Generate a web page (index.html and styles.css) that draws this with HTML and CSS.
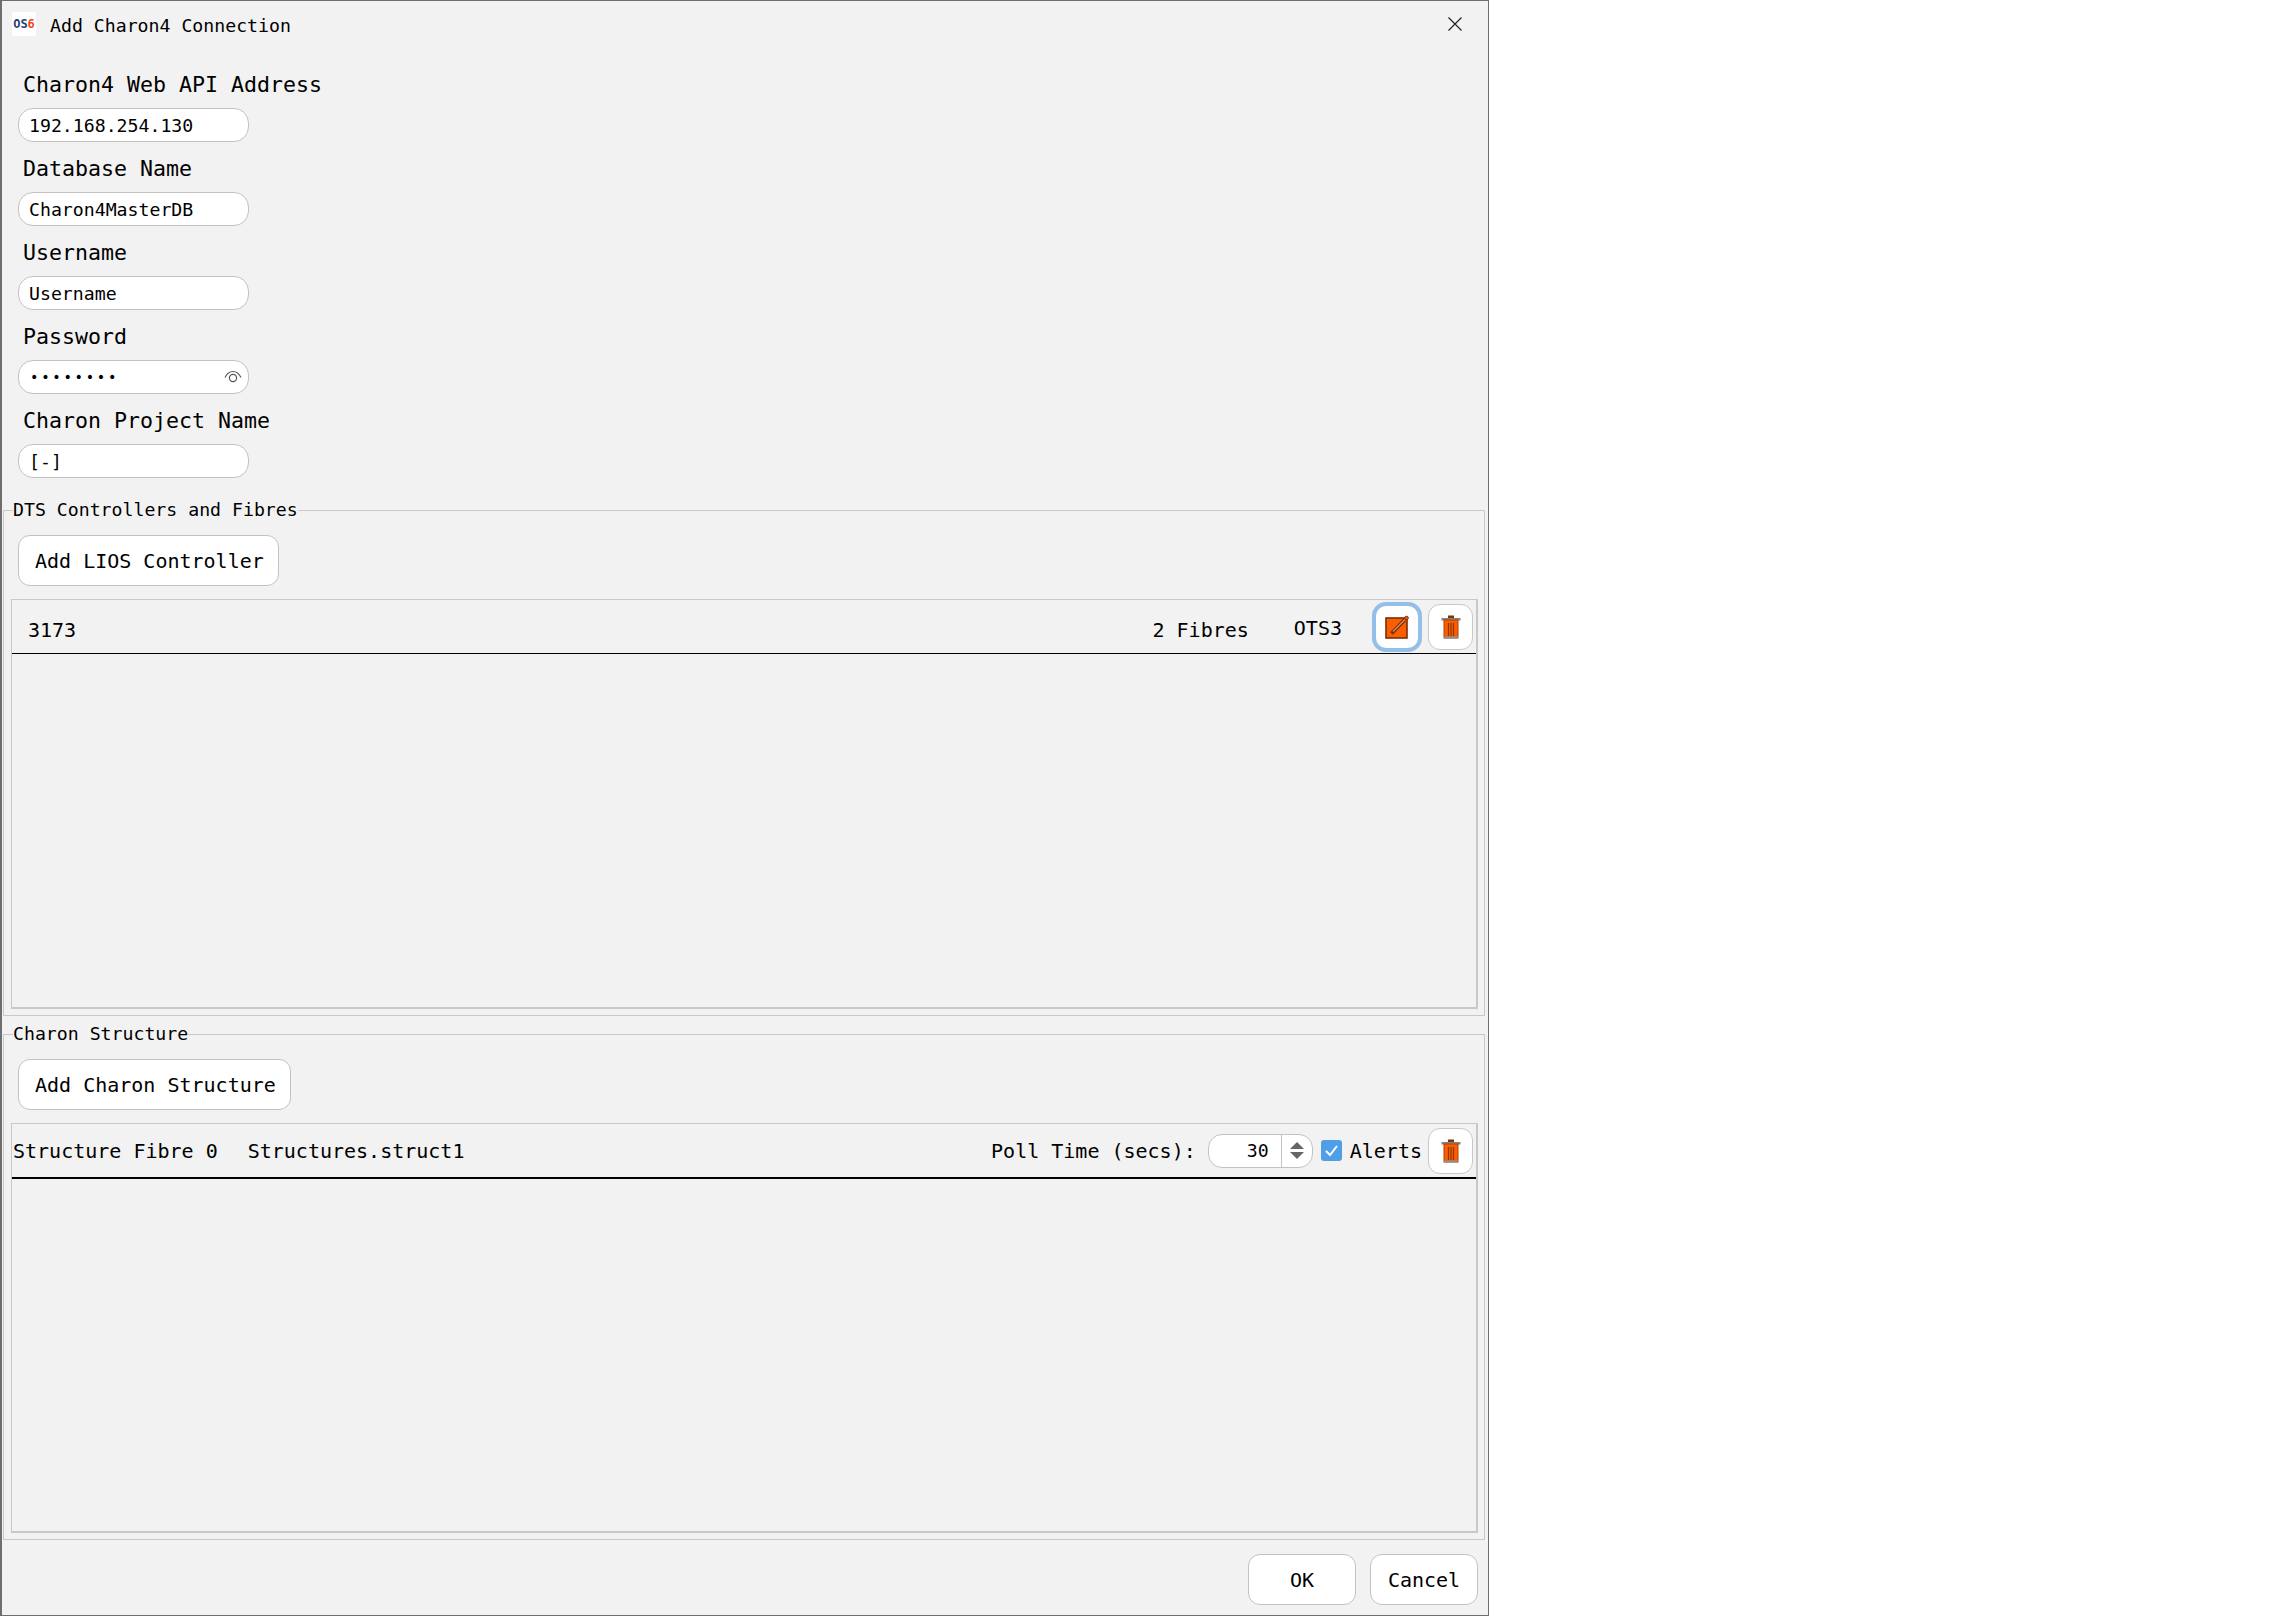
FILE: index.html
```html
<!DOCTYPE html>
<html lang="en">
<head>
<meta charset="utf-8">
<title>Add Charon4 Connection</title>
<link rel="stylesheet" href="styles.css">
</head>
<body>
<svg class="defs" width="0" height="0" aria-hidden="true">
  <symbol id="trash" viewBox="0 0 20 24">
    <rect x="7" y="0.5" width="6" height="3" fill="#7a3410"/>
    <rect x="0.5" y="3" width="19" height="2.5" fill="#8a8078"/>
    <rect x="3" y="5" width="14" height="18" fill="#fb5e00" stroke="#a8430a" stroke-width="1"/>
    <path d="M7.5 8v13M10 8v13M12.5 8v13" stroke="#8a3607" stroke-width="1.2" fill="none"/>
    <rect x="3" y="21.5" width="14" height="2" fill="#8f8f8f"/>
  </symbol>
</svg>
<main class="window">
  <header class="titlebar">
    <div class="logo"><span class="logo-os">OS</span><span class="logo-six">6</span></div>
    <div class="title">Add Charon4 Connection</div>
    <svg class="close" width="16" height="16" viewBox="0 0 16 16"><path d="M1.5 1.5l13 13M14.5 1.5l-13 13" stroke="#222" stroke-width="1.2" fill="none"/></svg>
  </header>

  <section class="fields">
    <div class="label">Charon4 Web API Address</div>
    <div class="input">192.168.254.130</div>
    <div class="label">Database Name</div>
    <div class="input">Charon4MasterDB</div>
    <div class="label">Username</div>
    <div class="input">Username</div>
    <div class="label">Password</div>
    <div class="input input-password">
      <span class="dots">••••••••</span>
      <svg class="eye" width="18" height="14" viewBox="0 0 18 14"><path d="M1 7.5C3 3.5 6 1.5 9 1.5s6 2 8 6" stroke="#555" stroke-width="1.1" fill="none"/><circle cx="9" cy="8" r="3.6" stroke="#555" stroke-width="1.2" fill="none"/></svg>
    </div>
    <div class="label">Charon Project Name</div>
    <div class="input">[-]</div>
  </section>

  <fieldset class="group group-first">
    <legend class="legend">DTS Controllers and Fibres</legend>
    <button class="btn btn-add" type="button">Add LIOS Controller</button>
    <div class="list">
      <div class="row row-controller">
        <span class="cell-id">3173</span>
        <span class="spacer"></span>
        <span class="cell-fibres">2 Fibres</span>
        <span class="cell-ots">OTS3</span>
        <button class="icon-btn icon-btn-focus" type="button" aria-label="Edit">
          <svg width="24" height="24" viewBox="0 0 24 24">
            <rect x="1" y="3" width="21" height="20" fill="#fb5e00" stroke="#7a2f05" stroke-width="1.6"/>
            <path d="M6.5 18.5L19.5 5" stroke="#7a2f05" stroke-width="3.8" fill="none"/>
            <path d="M8 16.5L19.5 5" stroke="#d8905e" stroke-width="1.2" fill="none"/>
            <circle cx="21.5" cy="3" r="1.8" fill="#fb5e00" stroke="#7a2f05"/>
          </svg>
        </button>
        <button class="icon-btn" type="button" aria-label="Delete"><svg class="trash" width="20" height="24"><use href="#trash"/></svg></button>
      </div>
    </div>
  </fieldset>

  <fieldset class="group">
    <legend class="legend">Charon Structure</legend>
    <button class="btn btn-add" type="button">Add Charon Structure</button>
    <div class="list">
      <div class="row row-structure">
        <span>Structure Fibre 0</span>
        <span class="cell-name">Structures.struct1</span>
        <span class="spacer"></span>
        <span>Poll Time (secs):</span>
        <div class="spin">
          <span class="spin-value">30</span>
          <span class="spin-arrows"><i class="arrow-up"></i><i class="arrow-down"></i></span>
        </div>
        <span class="check"><svg width="15" height="13" viewBox="0 0 15 13"><path d="M2 7l4 4 7-9" stroke="#fff" stroke-width="2" fill="none"/></svg></span>
        <span class="check-label">Alerts</span>
        <button class="icon-btn" type="button" aria-label="Delete"><svg class="trash" width="20" height="24"><use href="#trash"/></svg></button>
      </div>
    </div>
  </fieldset>

  <footer class="footer">
    <button class="btn btn-foot" type="button">OK</button>
    <button class="btn btn-foot" type="button">Cancel</button>
  </footer>
</main>
</body>
</html>
```
FILE: styles.css
```css
* { box-sizing: border-box; }
html, body { margin: 0; padding: 0; background: #fff; }
body { font-family: "DejaVu Sans Mono", "Liberation Mono", monospace; color: #000; }
.defs { position: absolute; }
.window {
  width: 1489px;
  height: 1616px;
  background: #f2f2f2;
  border: 1px solid #6e6e6e;
  border-left-width: 2px;
  display: flex;
  flex-direction: column;
}
.window > * { flex-shrink: 0; }
.titlebar {
  height: 57px;
  display: flex;
  align-items: flex-start;
  padding: 11px 25px 0 10px;
}
.logo {
  width: 24px;
  height: 24px;
  background: #fff;
  font: bold 12px/24px "DejaVu Sans Mono", monospace;
  text-align: center;
  letter-spacing: 0;
}
.logo-os { color: #1f3f73; }
.logo-six { color: #f2471c; }
.title { margin-left: 14px; font-size: 18.2px; line-height: 28px; }
.close { margin-left: auto; margin-top: 4px; }
.fields {
  display: flex;
  flex-direction: column;
  align-items: flex-start;
  padding-left: 16px;
}
.label {
  height: 50px;
  line-height: 54px;
  padding-left: 5px;
  font-size: 21.6px;
}
.input {
  width: 231px;
  height: 34px;
  background: #fff;
  border: 1px solid #c2c2c2;
  border-radius: 15px;
  padding-left: 10px;
  font-size: 18.2px;
  line-height: 33px;
}
.input-password { display: flex; align-items: center; justify-content: space-between; padding-right: 6px; }
.dots { font-size: 14px; letter-spacing: 2.7px; margin-left: 1px; }
.eye { display: block; }
.group {
  margin: 0 3px 0 1px;
  padding: 14px 6px 6px 7px;
  border: 1px solid #c8c8c8;
  min-width: 0;
}
.group-first { margin-top: 21px; margin-bottom: 7px; }
.legend {
  padding: 0;
  margin-left: 2px;
  font-size: 18.2px;
  line-height: 22px;
}
.btn {
  display: block;
  height: 51px;
  background: #fff;
  border: 1px solid #c2c2c2;
  border-radius: 12px;
  font-family: inherit;
  font-size: 20px;
  color: #000;
  padding: 0;
  text-align: center;
}
.btn-add { margin-left: 7px; padding: 0 14px 0 16px; }
.btn-foot { width: 108px; }
.footer {
  display: flex;
  justify-content: flex-end;
  gap: 14px;
  padding: 14px 10px 0 0;
}
.list {
  margin-top: 13px;
  height: 410px;
  border: 2px solid #c8c8c8;
  border-left-width: 1px;
  border-top-width: 1px;
}
.row {
  display: flex;
  align-items: center;
  font-size: 20px;
}
.row-controller { height: 54px; border-bottom: 1px solid #000; padding: 0 3px 0 16px; }
.row-structure { height: 55px; border-bottom: 2px solid #000; padding: 0 3px 0 1px; }
.spacer { flex: 1; }
.cell-id, .cell-fibres { margin-top: 6px; }
.cell-ots { margin-left: 45px; margin-top: 2px; }
.cell-name { margin-left: 30px; }
.icon-btn {
  width: 45px;
  height: 46px;
  background: #fff;
  border: 1px solid #c8c8c8;
  border-radius: 12px;
  padding: 0;
  display: flex;
  align-items: center;
  justify-content: center;
}
.icon-btn-focus {
  width: 50px;
  height: 50px;
  border: 4px solid #93bfe8;
  border-radius: 14px;
  margin: 0 6px 0 30px;
}
.spin {
  width: 105px;
  height: 34px;
  margin-left: 12px;
  background: #fff;
  border: 1px solid #c2c2c2;
  border-radius: 14px;
  display: flex;
  overflow: hidden;
}
.spin-value {
  width: 73px;
  text-align: right;
  padding-right: 12px;
  font-size: 18.2px;
  line-height: 32px;
  border-right: 1px solid #c2c2c2;
}
.spin-arrows {
  flex: 1;
  display: flex;
  flex-direction: column;
  align-items: center;
  justify-content: center;
  gap: 3px;
}
.arrow-up, .arrow-down { width: 0; height: 0; border-left: 7px solid transparent; border-right: 7px solid transparent; }
.arrow-up { border-bottom: 7px solid #666; }
.arrow-down { border-top: 7px solid #666; }
.check {
  width: 21px;
  height: 21px;
  margin-left: 8px;
  background: #4f9fe8;
  border-radius: 3px;
  display: flex;
  align-items: center;
  justify-content: center;
}
.check-label { margin-left: 8px; margin-right: 6px; }
```
